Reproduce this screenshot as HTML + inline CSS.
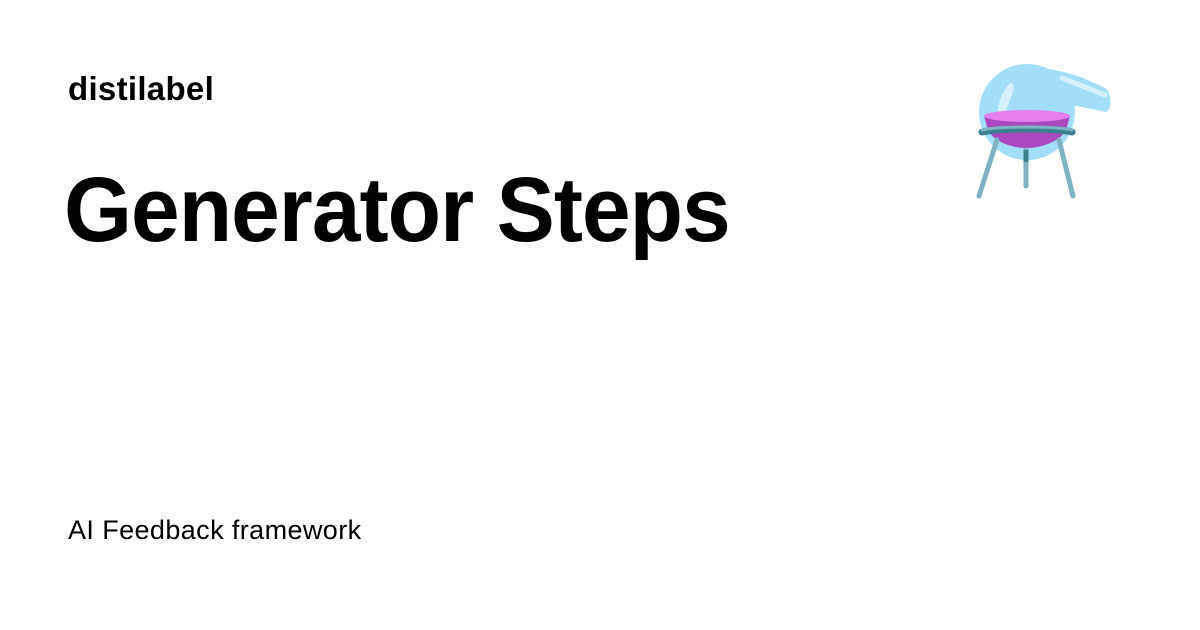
<!DOCTYPE html>
<html><head><style>
body{margin:0;width:1200px;height:630px;background:#fff;font-family:"Liberation Sans",Arial,sans-serif;position:relative;overflow:hidden;color:#000}
.a{position:absolute;left:68px;top:70px;font-size:33px;font-weight:bold;letter-spacing:0.3px}
.t{position:absolute;left:64px;top:158px;font-size:92px;font-weight:bold;letter-spacing:-1px;transform:scaleX(0.95);transform-origin:left top;white-space:nowrap}
.f{position:absolute;left:68px;top:515px;font-size:27px;letter-spacing:0.4px}
svg{position:absolute;left:960px;top:50px}
</style></head><body>
<div class="a">distilabel</div>
<div class="t">Generator Steps</div>
<div class="f">AI Feedback framework</div>
<svg width="170" height="160" viewBox="0 0 170 160">
<path d="M80 18 C105 20 125 28 145 38 C152 42 152 60 146 62 L112 55 Z" fill="#a3def8"/>
<circle cx="67" cy="62" r="48" fill="#a3def8"/>
<path d="M102 28 L145 45" stroke="#d6f1fc" stroke-width="5" stroke-linecap="round"/>
<path d="M48 35 C40 45 36 60 38 70 C42 75 46 60 52 45 C56 35 52 30 48 35Z" fill="#d6f1fc"/>
<path d="M24 66 L110 66 L106 80 C100 92 80 98 67 98 C52 98 34 92 28 80Z" fill="#ab48c0"/>
<ellipse cx="67" cy="66" rx="43" ry="6" fill="#e67ef0"/>
<path d="M22 82 C40 78 95 78 112 82" stroke="#3a8090" stroke-width="7" fill="none" stroke-linecap="round"/>
<path d="M22 80 C40 76 95 76 112 80" stroke="#7cb6c4" stroke-width="3" fill="none" stroke-linecap="round"/>
<path d="M37 90 L19 146 M99 90 L113 146 M66 100 L66 136" stroke="#7fb3c3" stroke-width="5" stroke-linecap="round"/>
<path d="M66 100 L66 112" stroke="#3a8090" stroke-width="5"/>
</svg>
</body></html>
